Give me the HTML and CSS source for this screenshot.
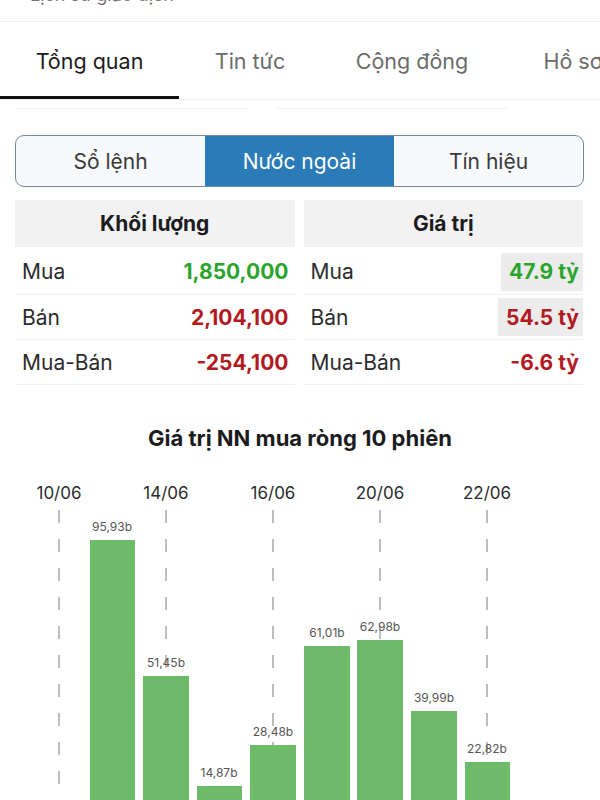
FILE: index.html
```html
<html>
  <head>
    <meta charset="utf-8">
    <link rel="stylesheet" href="styles.css">
  </head>
  <body>
    <div class="topbar"><span class="topbar-text">Lịch sử giao dịch</span></div>

    <div class="tabs">
      <div class="tab active">Tổng quan</div>
      <div class="tab">Tin tức</div>
      <div class="tab">Cộng đồng</div>
      <div class="tab">Hồ sơ</div>
    </div>
    <div class="ghost-lines"><span></span><span></span></div>

    <div class="segments">
      <div class="seg">Sổ lệnh</div>
      <div class="seg selected">Nước ngoài</div>
      <div class="seg">Tín hiệu</div>
    </div>

    <div class="tables">
      <div class="tbl">
        <div class="tbl-head">Khối lượng</div>
        <div class="row"><span>Mua</span><span class="val up">1,850,000</span></div>
        <div class="row"><span>Bán</span><span class="val down">2,104,100</span></div>
        <div class="row"><span>Mua-Bán</span><span class="val down">-254,100</span></div>
      </div>
      <div class="tbl">
        <div class="tbl-head">Giá trị</div>
        <div class="row"><span>Mua</span><span class="val up boxed">47.9 tỷ</span></div>
        <div class="row"><span>Bán</span><span class="val down boxed">54.5 tỷ</span></div>
        <div class="row"><span>Mua-Bán</span><span class="val down">-6.6 tỷ</span></div>
      </div>
    </div>

    <div class="chart-title">Giá trị NN mua ròng 10 phiên</div>

    <svg class="chart" width="600" height="330" viewBox="0 470 600 330">
      <g class="grid">
        <line x1="59" y1="510" x2="59" y2="800" />
        <line x1="166" y1="510" x2="166" y2="800" />
        <line x1="273" y1="510" x2="273" y2="800" />
        <line x1="380" y1="510" x2="380" y2="800" />
        <line x1="487" y1="510" x2="487" y2="800" />
      </g>
      <g class="dates">
        <text x="59" y="499">10/06</text>
        <text x="166" y="499">14/06</text>
        <text x="273" y="499">16/06</text>
        <text x="380" y="499">20/06</text>
        <text x="487" y="499">22/06</text>
      </g>
      <g class="bars">
        <rect x="90" y="540" width="45" height="260" />
        <rect x="143" y="676" width="46" height="124" />
        <rect x="197" y="786" width="45" height="14" />
        <rect x="250" y="745" width="46" height="55" />
        <rect x="304" y="646" width="46" height="154" />
        <rect x="357" y="640" width="46" height="160" />
        <rect x="411" y="711" width="46" height="89" />
        <rect x="465" y="762" width="45" height="38" />
      </g>
      <g class="labels">
        <text x="112" y="531">95,93b</text>
        <text x="166" y="667">51,45b</text>
        <text x="219" y="777">14,87b</text>
        <text x="273" y="736">28,48b</text>
        <text x="327" y="637">61,01b</text>
        <text x="380" y="631">62,98b</text>
        <text x="434" y="702">39,99b</text>
        <text x="487" y="753">22,82b</text>
      </g>
    </svg>
  </body>
</html>
```

FILE: styles.css
```css
body {
  margin: 0;
  width: 600px;
  height: 800px;
  overflow: hidden;
  background: #fff;
  font-family: Inter, "Liberation Sans", sans-serif;
  color: #1c1c1e;
}

/* strip of the previous screen, mostly scrolled away */
.topbar {
  height: 21px;
  overflow: hidden;
  border-bottom: 1px solid #efefef;
  padding-left: 30px;
}
.topbar-text {
  display: block;
  margin-top: -15px;
  font-size: 18px;
  line-height: 20px;
  color: #777;
}

.tabs {
  display: flex;
  height: 77px;
  border-bottom: 1px solid #f0f0f0;
  white-space: nowrap;
  overflow: hidden;
}
.tab {
  flex-shrink: 0;
  font-size: 21.5px;
  color: #6b6b6b;
  padding-top: 26px;
  text-align: center;
  box-sizing: border-box;
}
.tab:nth-child(1) { width: 179px; }
.tab:nth-child(2) { width: 142px; }
.tab:nth-child(3) { width: 182px; }
.tab:nth-child(4) { width: 140px; }
.tab.active {
  color: #1c1c1e;
  border-bottom: 3px solid #111;
}

.ghost-lines {
  display: flex;
  gap: 30px;
  padding: 8px 0 0 14px;
  height: 1px;
}
.ghost-lines span {
  width: 232px;
  border-top: 1px solid #f1f2f4;
}

.segments {
  display: flex;
  margin: 26px 16px 0 15px;
  height: 50px;
  border: 1.5px solid #6e8ba3;
  border-radius: 9px;
  overflow: hidden;
  background: #f8f9fb;
}
.seg {
  flex: 1;
  display: flex;
  align-items: center;
  justify-content: center;
  font-size: 21px;
  color: #3a3a3c;
}
.seg.selected {
  background: #2b7bb8;
  color: #fff;
}

.tables {
  display: flex;
  gap: 9px;
  margin: 13px 17px 0 15px;
}
.tbl {
  flex: 1;
}
.tbl-head {
  height: 47px;
  display: flex;
  align-items: center;
  justify-content: center;
  background: #f2f2f2;
  font-size: 21px;
  font-weight: 700;
}
.row {
  height: 44px;
  display: flex;
  align-items: center;
  justify-content: space-between;
  border-bottom: 1px solid #f0f0f0;
  padding-left: 7px;
  font-size: 21px;
  color: #2c2c2e;
}
.tbl .row:nth-child(2) {
  height: 45px;
  padding-top: 2px;
}
.val {
  font-weight: 700;
  padding: 0 6px;
}
.tbl:last-child .val {
  padding-right: 4px;
}
.val.boxed {
  background: #ececec;
  height: 38px;
  display: flex;
  align-items: center;
  padding-left: 8px;
}
.up {
  color: #2aa52c;
}
.down {
  color: #b21a22;
}

.chart-title {
  margin-top: 40px;
  text-align: center;
  font-size: 22px;
  font-weight: 700;
  height: 26px;
}

.chart {
  display: block;
  margin-top: 19px;
}
.grid line {
  stroke: #a9a9a9;
  stroke-width: 1.5;
  stroke-dasharray: 13 16;
}
.dates text {
  font-family: Inter, "Liberation Sans", sans-serif;
  font-size: 17px;
  fill: #2c2c2e;
  text-anchor: middle;
}
.bars rect {
  fill: #6dbb6a;
}
.labels text {
  font-family: Inter, "Liberation Sans", sans-serif;
  font-size: 12px;
  fill: #555;
  text-anchor: middle;
}
```
